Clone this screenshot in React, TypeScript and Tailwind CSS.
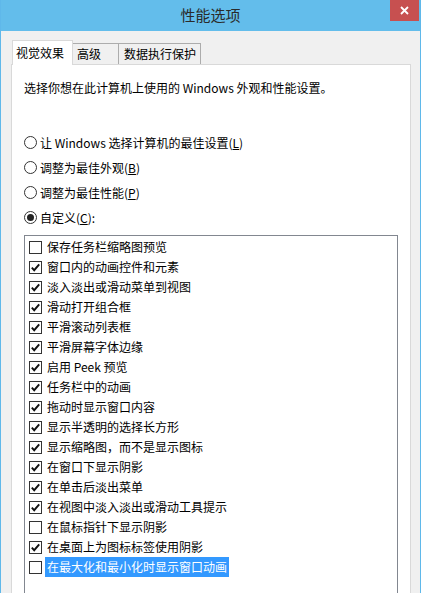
import React from "react";

const font = { fontFamily: '"Noto Sans CJK SC", "Noto Sans", sans-serif' };

const effects = [
  { label: "保存任务栏缩略图预览", checked: false },
  { label: "窗口内的动画控件和元素", checked: true },
  { label: "淡入淡出或滑动菜单到视图", checked: true },
  { label: "滑动打开组合框", checked: true },
  { label: "平滑滚动列表框", checked: true },
  { label: "平滑屏幕字体边缘", checked: true },
  { label: "启用 Peek 预览", checked: true },
  { label: "任务栏中的动画", checked: true },
  { label: "拖动时显示窗口内容", checked: true },
  { label: "显示半透明的选择长方形", checked: true },
  { label: "显示缩略图，而不是显示图标", checked: true },
  { label: "在窗口下显示阴影", checked: true },
  { label: "在单击后淡出菜单", checked: true },
  { label: "在视图中淡入淡出或滑动工具提示", checked: true },
  { label: "在鼠标指针下显示阴影", checked: false },
  { label: "在桌面上为图标标签使用阴影", checked: true },
  { label: "在最大化和最小化时显示窗口动画", checked: false, selected: true },
];

const Radio = ({ checked, children }: { checked?: boolean; children: React.ReactNode }) => (
  <div className="flex items-center h-[25px]">
    <div className="w-[13px] h-[13px] rounded-full border border-[#333333] bg-white flex items-center justify-center">
      {checked && <div className="w-[7px] h-[7px] rounded-full bg-[#222222]"></div>}
    </div>
    <span className="ml-[3px] text-[12px] text-[#000000]">{children}</span>
  </div>
);

const Check = ({ checked }: { checked: boolean }) => (
  <div className="w-[13px] h-[13px] border border-[#333333] bg-white shrink-0 flex items-center justify-center">
    {checked && (
      <svg width="11" height="11" viewBox="0 0 11 11">
        <path d="M1.8 5.6 L4.2 8.2 L9.2 2.4" fill="none" stroke="#111" strokeWidth="1.9" />
      </svg>
    )}
  </div>
);

export default function App() {
  return (
    <div
      style={font}
      className="w-[421px] h-[593px] overflow-hidden bg-[#f0f0f0] border-x border-[#5fb8ea] flex flex-col"
    >
      {/* title bar */}
      <div className="relative h-[31px] shrink-0 bg-[#63bdeb] flex items-center justify-center">
        <span className="text-[15px] text-[#2a2a2a]">性能选项</span>
        <div className="absolute top-0 right-[1px] w-[29px] h-[21px] bg-[#c75050] flex items-center justify-center">
          <svg width="9" height="9" viewBox="0 0 9 9">
            <path d="M1 1 L8 8 M8 1 L1 8" stroke="#fff" strokeWidth="1.8" />
          </svg>
        </div>
      </div>

      <div className="pl-[10px] pr-[9px] pt-[9px] flex flex-col">
        {/* tabs */}
        <div className="flex items-end h-[24px] text-[12px] text-[#000000] relative z-10 pl-[1px]">
          <div className="h-[25px] w-[61px] -mb-[1px] pl-[3px] bg-white border border-b-0 border-[#d9d9d9] flex items-center">
            视觉效果
          </div>
          <div className="h-[21px] w-[46px] pl-[4px] bg-[#f0f0f0] border border-l-0 border-b-0 border-[#acacac] flex items-center">
            高级
          </div>
          <div className="h-[21px] w-[82px] pl-[5px] bg-[#f0f0f0] border border-l-0 border-b-0 border-[#acacac] flex items-center">
            数据执行保护
          </div>
        </div>

        {/* panel */}
        <div className="bg-white border border-[#d9d9d9] h-[600px] pl-[12px] pr-[12px] pt-[13px]">
          <p className="text-[12px] leading-[20px] text-[#000000]">
            选择你想在此计算机上使用的 Windows 外观和性能设置。
          </p>

          <div className="mt-[32px] flex flex-col">
            <Radio>
              让 Windows 选择计算机的最佳设置(<span className="underline">L</span>)
            </Radio>
            <Radio>
              调整为最佳外观(<span className="underline">B</span>)
            </Radio>
            <Radio>
              调整为最佳性能(<span className="underline">P</span>)
            </Radio>
            <Radio checked>
              自定义(<span className="underline">C</span>):
            </Radio>
          </div>

          <div className="mt-[5px] border border-[#828790] h-[400px] pt-[1px] pl-[4px]">
            {effects.map((e, i) => (
              <div key={i} className="flex items-center h-[20px]">
                <Check checked={e.checked} />
                <span
                  className={
                    e.selected
                      ? "ml-[3px] px-[2px] h-[20px] leading-[20px] text-[12px] bg-[#3399ff] text-white"
                      : "ml-[3px] px-[2px] leading-[20px] text-[12px] text-[#000000]"
                  }
                >
                  {e.label}
                </span>
              </div>
            ))}
          </div>
        </div>
      </div>
    </div>
  );
}
